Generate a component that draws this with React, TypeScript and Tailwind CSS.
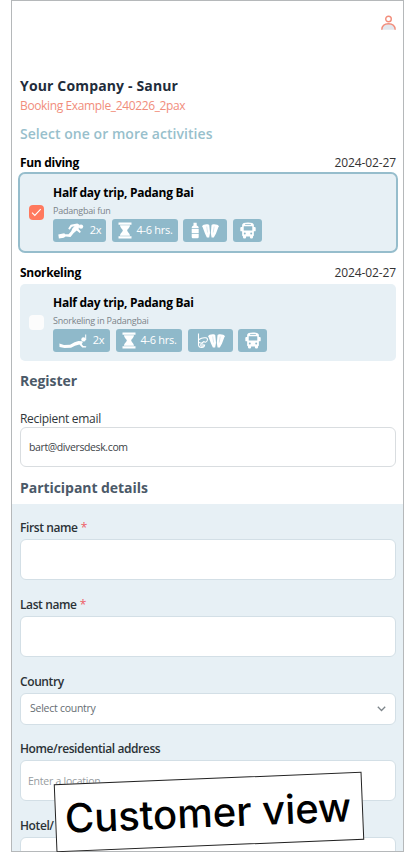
import type { ReactNode } from "react";

function DiverIcon() {
  return (
    <svg width="26" height="17" viewBox="0 0 26 17" fill="white">
      <path d="M.3 12.600 6.200 11.200 7.200 12.300 10.600 12.200 13.200 9.300 14.500 6.200 16.600 4.200 13.900 4.700 11.600 7.700 10.200 6.600 12.700 2.700 19.300 1.500 21.500 2.800 20.600 7 22.900 9.800 21.700 11 18.700 8.600 15.500 11.300 12.500 14.900 7.600 14.600 5.800 15.800.9 16.500Z" />
      <circle cx="23" cy="4.600" r="2.200" />
    </svg>
  );
}

function SnorkelIcon() {
  return (
    <svg width="28" height="17" viewBox="0 0 28 17" fill="white">
      <path d="M.4 11.500 5 13 11 12.700 15.500 10.300 19.500 8.900 23 9.200 23.800 10.500 22.700 12 24.200 13.900 27.300 14.300 27 15.500 23.300 15.400 20.400 12.600 16 13.800 12 15.800 5.500 16 .5 15Z" />
      <circle cx="24.500" cy="7.400" r="2.200" />
      <path d="M26.700 2.500v5.500" fill="none" stroke="white" strokeWidth="1" />
    </svg>
  );
}

function HourglassIcon() {
  return (
    <svg width="14" height="17" viewBox="0 0 14 17" fill="white">
      <path d="M.5.5h13v2.200H.5zM.5 14.300h13v2.200H.5zM2 3.200h10C11.800 6 9.200 7 9.200 8.500s2.600 2.500 2.800 5.300H2C2.200 11 4.800 10 4.800 8.500S2.200 6 2 3.200Z" />
    </svg>
  );
}

function Fins() {
  return (
    <g fill="white">
      <path d="M.3 3.200C.5 1.200 6.800.6 7.300 2.300L8 10 7.200 14.500H4.900L3 10.500Z" />
      <path d="M9.500 2.300C10 .6 16.500 1.200 16.700 3.200L14 10.500 11.800 14.500H9.600L8.800 10Z" />
      <path d="m4.700 3.500.9 6M12.200 3.500l-1 6" fill="none" stroke="#b3d0dc" strokeWidth=".5" />
    </g>
  );
}

function TankFinsIcon() {
  return (
    <svg width="28" height="17" viewBox="0 0 28 17" fill="white">
      <path d="M2.500.7h3.200v2.800c1.500.5 2 1.300 2 2.700H.7c0-1.400.5-2.200 1.800-2.700ZM.7 7h7v4h-7zM.7 11.800h7V15q0 1.300-1.200 1.300H1.900Q.7 16.300.7 15Z" />
      <g transform="translate(11 1)"><Fins /></g>
    </svg>
  );
}

function MaskFinsIcon() {
  return (
    <svg width="28" height="17" viewBox="0 0 28 17" fill="none" stroke="white" strokeWidth="1.100">
      <path d="M1.500 1.500v11q0 3 3.200 3 2.800 0 3-3M2 7.500q3-2.300 6.800-1.700 2 .4 1.600 2.200-.4 2-1.800 2.200L6.800 9.700 4.500 11.200 2 10.500" />
      <circle cx="5" cy="13" r="1.300" />
      <g transform="translate(11 1)" stroke="none"><Fins /></g>
    </svg>
  );
}

function BusIcon() {
  return (
    <svg width="16" height="17" viewBox="0 0 15 17" preserveAspectRatio="none">
      <path fill="white" d="M7.500.5C11 .5 13 1.300 13 3v2h.8q.9 0 .9 1v2.400q0 .9-.9.900H13v4q0 .9-.8 1v1q0 1.200-1.200 1.200h-.6q-1.100 0-1.100-1.200v-.8H5.700v.8q0 1.200-1.100 1.200H4q-1.200 0-1.200-1.200v-1q-.8-.1-.8-1v-4h-.8q-.9 0-.9-.9V6q0-1 .9-1H2V3C2 1.300 4 .5 7.500.5Z" />
      <path fill="#8fb9ca" d="M4.800 2h5.400v.8H4.800zM3.500 4.300h8v4.100h-8z" />
      <circle cx="4.500" cy="11.500" r=".9" fill="#8fb9ca" />
      <circle cx="10.500" cy="11.500" r=".9" fill="#8fb9ca" />
    </svg>
  );
}

function Chip({ className, children }: { className: string; children: ReactNode }) {
  return (
    <div className={`flex h-[23px] shrink-0 items-center justify-center rounded-[3px] bg-[#8fb9ca] text-[11px] tracking-[-0.3px] text-white ${className}`}>
      {children}
    </div>
  );
}

function Activity({ checked, note, children }: { checked?: boolean; note: string; children: ReactNode }) {
  return (
    <div className={`-mx-0.5 flex h-[81px] shrink-0 rounded-[7px] border-2 bg-[#e7f0f5] bg-clip-padding ${checked ? "border-[#96bdcc]" : "border-transparent"}`}>
      <div className="flex w-[33px] shrink-0 items-center pl-[9px]">
        <div className={`flex size-[15px] items-center justify-center rounded-[4px] ${checked ? "bg-[#ff795e]" : "bg-[#fcfcfc]"}`}>
          {checked && (
            <svg width="11" height="9" viewBox="0 0 11 9" fill="none" stroke="white" strokeWidth="1.100">
              <path d="m1 4.700 2.800 2.800L9.700 1.200" />
            </svg>
          )}
        </div>
      </div>
      <div className="flex flex-col pt-[9px]">
        <div className="h-5 text-[12px] leading-5 font-bold tracking-[-0.27px] text-black">Half day trip, Padang Bai</div>
        <div className="h-4 text-[9px] leading-4 tracking-[-0.23px] text-[#7b8389]">{note}</div>
        <div className="flex">{children}</div>
      </div>
    </div>
  );
}

function ActivityHeading({ name }: { name: string }) {
  return (
    <div className="flex h-5 items-center justify-between pt-0.5">
      <span className="text-[12px] font-bold tracking-[-0.3px] text-black">{name}</span>
      <span className="text-[12px] tracking-[-0.1px] text-[#333]">2024-02-27</span>
    </div>
  );
}

function Label({ children, required }: { children: ReactNode; required?: boolean }) {
  return (
    <div className="mb-px h-5 text-[12px] leading-5 font-semibold tracking-[-0.4px] text-[#2b3236]">
      {children}
      {required && <span className="font-normal tracking-normal text-[#ee5c65]"> *</span>}
    </div>
  );
}

const box = "flex items-center rounded-[6px] border border-[#d3dfe6] bg-white";

export default function App() {
  return (
    <div className="relative h-[852px] w-[415px] overflow-hidden bg-white font-['Open_Sans','Noto_Sans',sans-serif]">
      <div className="ml-[11px] flex h-[852px] w-[393px] flex-col overflow-hidden border border-[#b5b8ba]">
        <div className="flex h-[75px] shrink-0 justify-end pt-3.5 pr-[7px]">
          <svg width="15" height="16" viewBox="0 0 15 16" fill="none" stroke="#f28d7b" strokeWidth="1.400">
            <path d="M.8 14.700C1 10.800 3.500 8.800 7.500 8.800s6.500 2 6.700 5.900" fill="#e3e7ed" />
            <circle cx="7.500" cy="4" r="2.800" />
          </svg>
        </div>
        <div className="flex h-[428px] shrink-0 flex-col pr-[7px] pl-2">
          <div className="h-5 text-[14px] leading-5 font-bold tracking-[0.15px] text-[#222c3b]">Your Company - Sanur</div>
          <div className="h-[18px] text-[12px] leading-5 tracking-[-0.37px] text-[#f18d7c]">Booking Example_240226_2pax</div>
          <div className="mt-[9px] h-[22px] text-[14px] leading-[22px] font-semibold tracking-[0.05px] text-[#98bfcc]">Select one or more activities</div>
          <div className="mt-[7px]"><ActivityHeading name="Fun diving" /></div>
          <Activity checked note="Padangbai fun">
            <Chip className="w-[53px] gap-1.5"><DiverIcon />2x</Chip>
            <Chip className="ml-1.5 w-[66px] gap-[5px]"><HourglassIcon />4-6 hrs.</Chip>
            <Chip className="ml-[5px] w-[44px]"><TankFinsIcon /></Chip>
            <Chip className="ml-1.5 w-[29px]"><BusIcon /></Chip>
          </Activity>
          <div className="mt-[9px]"><ActivityHeading name="Snorkeling" /></div>
          <Activity note="Snorkeling in Padangbai">
            <Chip className="w-[57px] gap-1.5"><SnorkelIcon />2x</Chip>
            <Chip className="ml-1.5 w-[66px] gap-[5px]"><HourglassIcon />4-6 hrs.</Chip>
            <Chip className="ml-1.5 w-[45px]"><MaskFinsIcon /></Chip>
            <Chip className="ml-[5px] w-[29px]"><BusIcon /></Chip>
          </Activity>
          <div className="mt-[7px] h-[22px] text-[14px] leading-[22px] font-bold tracking-[-0.02px] text-[#4b5968]">Register</div>
          <div className="mt-4 h-5 text-[12px] leading-[22px] tracking-[-0.3px] text-[#30363a]">Recipient email</div>
          <div className="mt-[-1px] flex h-10 shrink-0 items-center rounded-[6px] border border-[#d9dde0] pt-0.5 pl-2 text-[10.500px] tracking-[-0.38px] text-[#3c4247]">bart@diversdesk.com</div>
          <div className="mt-[10px] h-[22px] text-[14px] leading-[22px] font-bold tracking-[-0.05px] text-[#4b5968]">Participant details</div>
        </div>
        <div className="flex h-[348px] shrink-0 flex-col bg-[#e7f0f5] pt-3.5 pr-[7px] pl-2">
          <Label required>First name</Label>
          <div className={`${box} h-[41px] shrink-0`} />
          <div className="mt-[15px]"><Label required>Last name</Label></div>
          <div className={`${box} h-[41px] shrink-0`} />
          <div className="mt-[15px]"><Label>Country</Label></div>
          <div className={`${box} h-8 shrink-0 justify-between pr-[9px] pl-[9px] text-[10.500px] tracking-[-0.26px] text-[#666d72]`}>
            Select country
            <svg width="9" height="6" viewBox="0 0 9 6" fill="none" stroke="#7d858a" strokeWidth="1.300">
              <path d="m.8.800 3.700 3.700L8.200.8" />
            </svg>
          </div>
          <div className="mt-[14px]"><Label>Home/residential address</Label></div>
          <div className={`${box} h-[41px] shrink-0 pt-0.5 pl-[7px] text-[10.500px] tracking-[-0.25px] text-[#979da1]`}>Enter a location</div>
          <div className="mt-[15px]"><Label>Hotel/</Label></div>
          <div className={`${box} h-[41px] shrink-0`} />
        </div>
      </div>
      <div className="absolute top-[777.5px] left-[54.500px] flex h-[68px] w-[308px] -rotate-[2.330deg] items-center justify-center border border-[#222] bg-white pt-0.5 pr-0.5 font-['Inter',sans-serif] text-[40px] font-medium whitespace-nowrap text-black">
        Customer view
      </div>
    </div>
  );
}
